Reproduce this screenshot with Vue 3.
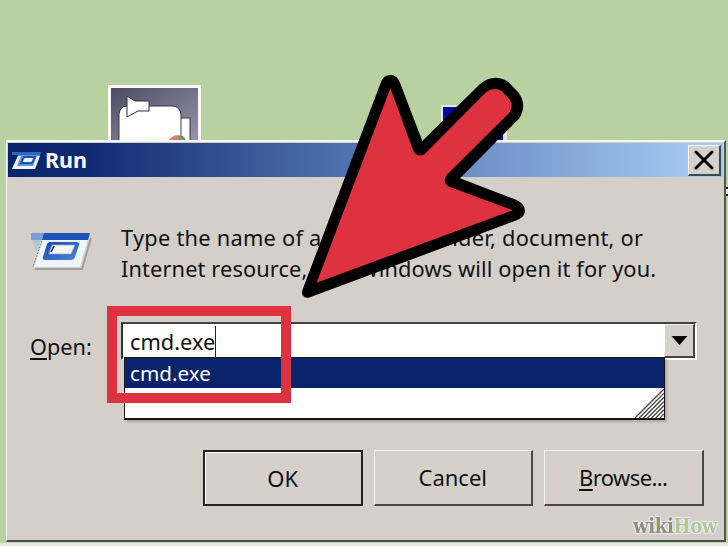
<script setup>
import { ref } from 'vue'

const command = ref('cmd.exe')
const suggestions = ['cmd.exe']
</script>

<template>
  <main class="desktop">
    <svg class="shortcut" viewBox="0 0 93 56">
      <defs>
        <linearGradient id="tile" x2="1" y2="1">
          <stop offset="0" stop-color="#4d4964" />
          <stop offset=".55" stop-color="#77758c" />
          <stop offset="1" stop-color="#9694ac" />
        </linearGradient>
      </defs>
      <path d="M0 0H93V56H0Z" fill="#fbfbfb" />
      <path d="M3 3H90V56H3Z" fill="url(#tile)" />
      <path d="M11 56V29Q12 22 18 21H65Q72 22 73 29V33H82V56Z" fill="#fff" stroke="#3a3a44" stroke-width="1" />
      <path d="M73 33V56" stroke="#444" />
      <path d="M19 11L27 16H41V26H30L19 32Z" fill="#fff" stroke="#33333c" stroke-width="1" />
      <path d="M60 56Q66 48 73 51L70 56Z" fill="#d8806c" />
      <path d="M70 51Q76 49 78 56H71Z" fill="#6d9b68" />
    </svg>
    <svg class="shortcut-blue" viewBox="0 0 66 35">
      <path d="M0 0H15V35H0ZM58 20H66V35H58Z" fill="#e5e8f2" />
      <path d="M2 2H18V35H2ZM48 18H62V35H48Z" fill="#0808a8" />
    </svg>
    <i class="edge-mark"></i>

    <section class="dialog">
      <header class="titlebar">
        <svg class="title-icon" viewBox="0 0 30 20">
          <path d="M1 2H30L24 19H1L7 5H1Z" fill="#5d91dc" />
          <path d="M1 2H30L29 5H1Z" fill="#2d68c0" />
          <path d="M7 6H10L6 16H22L26 6H29L24 19H1Z" fill="#edf5ff" />
          <path d="M13 7H24L21 13H10Z" fill="#e8f2ff" stroke="#1d51b5" stroke-width="1.8" />
        </svg>
        <h1>Run</h1>
        <button class="close" aria-label="Close">
          <svg viewBox="0 0 20 20"><path d="M2 2L18 18M18 2L2 18" stroke="#000" stroke-width="3" stroke-linecap="round" /></svg>
        </button>
      </header>

      <div class="message">
        <svg class="run-icon" viewBox="0 0 62 40">
          <defs>
            <linearGradient id="frame" x2="1" y2="1">
              <stop offset="0" stop-color="#1747ae" />
              <stop offset="1" stop-color="#4c87dd" />
            </linearGradient>
          </defs>
          <path d="M5 39H52L61 8" fill="none" stroke="#8d8b86" stroke-width="2" opacity=".7" />
          <path d="M1 3H16L9 23Q2 17 1 3Z" fill="#aebfda" opacity=".7" />
          <path d="M13 5H59L50 37H3Z" fill="#eef5fd" />
          <path d="M13 8L3 37" stroke="#66717e" stroke-dasharray="2 1" />
          <path d="M13 3H60L58 10H12Z" fill="#2053b9" />
          <path d="M1 3H14L12 10H1Z" fill="#7c9fd9" />
          <path d="M19 12H47Q50 12 49 15L45 27Q44 30 41 30H15Q12 30 13 27L17 14Z" fill="url(#frame)" />
          <path d="M22 15H45L41 24H19Z" fill="#f3f7ee" stroke="#8ba8cb" stroke-width=".7" />
          <path d="M24 16L21 22" stroke="#222" stroke-width="1.4" />
        </svg>
        <p>
          <span class="line-one">Type the name of a program, folder, document, or</span>
          <span class="line-two">Internet resource, and Windows will open it for you.</span>
        </p>
      </div>

      <div class="open-row">
        <label><u>O</u>pen:</label>
        <div class="combo">
          <div class="field"><span>{{ command }}</span><i class="caret"></i></div>
          <button class="drop" aria-label="Show list">
            <svg viewBox="0 0 16 9"><path d="M0 0H16L8 9Z" /></svg>
          </button>
          <ul class="list">
            <li v-for="item in suggestions" :key="item">{{ item }}</li>
            <svg class="grip" viewBox="0 0 28 28">
              <path d="M0 28L28 0M4 28L28 4M8 28L28 8M12 28L28 12M16 28L28 16M20 28L28 20M24 28L28 24" stroke="#444" stroke-width="1.3" />
            </svg>
          </ul>
        </div>
      </div>

      <footer class="actions">
        <button class="action default">OK</button>
        <button class="action">Cancel</button>
        <button class="action browse"><span><u>B</u>rowse...</span></button>
      </footer>
    </section>

    <div class="highlight"></div>
    <svg class="pointer" viewBox="0 0 750 750">
      <path d="M272 68Q279 45 301 45Q322 45 330 68L397 243L570 72Q612 38 655 66L686 98Q712 135 688 175L510 355L675 418Q706 430 705 455Q702 472 682 480L60 712Q46 717 38 706Q34 698 38 688Z" />
      <path d="M301 85L370 272Q380 292 402 284L588 97Q612 78 636 94L658 118Q672 138 658 158L470 345Q455 368 478 380L668 451L80 668Z" fill="#df3241" />
    </svg>
    <div class="watermark"><span>wiki</span><b>How</b></div>
  </main>
</template>

<style>
body { overflow: hidden; }
</style>

<style scoped>
* { box-sizing: border-box; }
.desktop {
  position: relative;
  width: 728px;
  height: 546px;
  padding: 140px 2px 0 6px;
  overflow: hidden;
  background: linear-gradient(#b9d1a1 0 541px, #c3d0b5 541px 543px, #e3ecd9 543px);
  font-family: "Noto Sans", sans-serif;
  color: #111;
}
.shortcut { position: absolute; left: 108px; top: 85px; width: 93px; height: 56px; }
.shortcut-blue { position: absolute; left: 441px; top: 105px; width: 66px; height: 35px; }
.edge-mark { position: absolute; right: 0; top: 187px; width: 3px; height: 9px; border: solid #111; border-width: 2px 0; background: #e8eedf; }
.dialog {
  position: relative;
  display: flex;
  flex-direction: column;
  width: 720px;
  height: 402px;
  padding: 1px 1px 0;
  background: #d4cfc9;
  border: solid;
  border-width: 2px 2px 2px 1px;
  border-color: #f8f8f5 #4c5a50 #50534a #f8f8f5;
}
.titlebar {
  display: flex;
  align-items: center;
  flex: none;
  height: 34px;
  padding: 0 2px 0 3px;
  background: linear-gradient(90deg, #0a246a 0, #0d2870 10%, #4768a8 42%, #7799cd 70%, #a2c7f2 95%);
}
.title-icon { width: 30px; height: 20px; }
h1 { flex: 1; margin: -1px 0 0 4px; font: bold 21.5px/32px "Noto Sans", sans-serif; color: #fff; }
button { padding: 0; font: inherit; color: inherit; background: #d5d1ca; border-radius: 0; }
.close {
  display: grid;
  place-items: center;
  width: 33px;
  height: 31px;
  border: solid;
  border-width: 1px 2px 2px 1px;
  border-color: #fff #3c4950 #3c4950 #fff;
}
.close svg { width: 20px; height: 20px; }
.message { display: flex; align-items: flex-start; gap: 29px; padding: 45px 0 0 22px; }
.run-icon { flex: none; width: 62px; height: 40px; margin-top: 8px; }
.message p { margin: 0; font-size: 21.8px; line-height: 31px; white-space: nowrap; }
.message p span { display: block; }
.line-one { letter-spacing: .25px; }
.line-two { letter-spacing: .11px; }
.open-row { display: flex; align-items: center; gap: 29px; padding: 36px 0 0 22px; }
label { width: 63px; margin-top: 12px; font-size: 21.7px; line-height: 30px; white-space: nowrap; }
u { text-decoration-thickness: 1.5px; text-underline-offset: 3px; }
.combo {
  position: relative;
  display: flex;
  width: 576px;
  height: 38px;
  margin-left: -1px;
  border: solid;
  border-width: 2px;
  border-color: #44443f #fff #fff #333;
  background: #fff;
}
.field { display: flex; align-items: center; flex: 1; padding-left: 7px; font-size: 21.8px; }
.caret { width: 1px; height: 31px; background: #222; }
.drop {
  display: grid;
  place-items: center;
  width: 31px;
  border: solid;
  border-width: 1px 2px 2px 1px;
  border-color: #eee #45453f #45453f #fff;
}
.drop svg { width: 17px; height: 9px; }
.list {
  position: absolute;
  left: 1px;
  top: 33px;
  width: 541px;
  height: 63px;
  margin: 0;
  padding: 0;
  list-style: none;
  background: #fff;
  border: solid #151515;
  border-width: 1px 1px 2px;
  box-shadow: 2px 2px 2px #8888;
}
.list li { height: 30px; padding-left: 5px; background: #09246a; color: #fff; font-size: 20.7px; line-height: 30px; }
.grip { position: absolute; right: 0; bottom: 0; width: 29px; height: 29px; }
.actions { display: flex; gap: 11px; margin: 88px 0 0 195px; }
.action {
  width: 159.5px;
  height: 56px;
  padding-bottom: 1px;
  font-size: 22px;
  line-height: 30px;
  border: solid;
  border-width: 1.5px 2px 2px 1.5px;
  border-color: #f5f5f0 #494943 #494943 #f5f5f0;
}
.action.default { border: 2px solid #222; box-shadow: inset 1px 1px #fff; }
.browse { letter-spacing: -.6px; }
.highlight { position: absolute; left: 107px; top: 306px; width: 184px; height: 97px; border: 10px solid #df3241; }
.pointer { position: absolute; left: 290px; top: 60px; width: 250px; height: 250px; }
.watermark {
  position: absolute;
  left: 633px;
  top: 513px;
  font: bold 20px/26px "DejaVu Serif Condensed", "DejaVu Serif", serif;
  letter-spacing: -.3px;
  color: #8c8d83;
  text-shadow: 0 0 2px #fff, 0 0 2px #fff, 0 0 2px #fff;
}
.watermark b { color: #b1c49a; }
</style>
